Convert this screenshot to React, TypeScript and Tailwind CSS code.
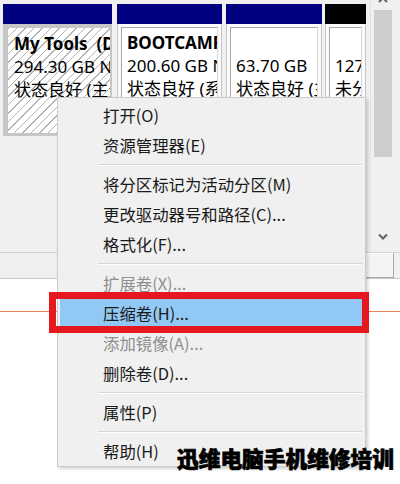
import React from "react";

type Item = { label: string; disabled?: boolean; active?: boolean } | "sep";

const items: Item[] = [
  { label: "打开(O)" },
  { label: "资源管理器(E)" },
  "sep",
  { label: "将分区标记为活动分区(M)" },
  { label: "更改驱动器号和路径(C)..." },
  { label: "格式化(F)..." },
  "sep",
  { label: "扩展卷(X)...", disabled: true },
  { label: "压缩卷(H)...", active: true },
  { label: "添加镜像(A)...", disabled: true },
  { label: "删除卷(D)..." },
  "sep",
  { label: "属性(P)" },
  "sep",
  { label: "帮助(H)" },
];

function Tile({
  width,
  ml,
  header,
  selected,
  lines,
}: {
  width: string;
  ml: string;
  header: string;
  selected?: boolean;
  lines: { text: string; bold?: boolean }[];
}) {
  const rows = lines.map((l, i) => (
    <div
      key={i}
      className={`h-[23px] leading-[23px] whitespace-pre text-[17px] text-black ${l.bold ? "font-bold" : ""}`}
    >
      {l.text}
    </div>
  ));
  return (
    <div className={`${width} ${ml} flex flex-col shrink-0`}>
      <div className={`h-[20px] ${header}`} />
      {selected ? (
        <div className="h-[112px] bg-[#c6c6c6] pt-[4px] pl-[5px] pr-[2px] pb-[3px] flex">
          <div className="flex-1 overflow-hidden bg-[repeating-linear-gradient(135deg,#b4b4b4_0px,#b4b4b4_1px,#ffffff_1px,#ffffff_6px)] pl-[6px] pt-[4px]">
            {rows}
          </div>
        </div>
      ) : (
        <div className="h-[112px] bg-[#fbfbfb] border-x border-b border-[#c4c4c4] pt-[3px] px-[3px] pb-[3px] flex">
          <div className="flex-1 overflow-hidden bg-white border border-t-[#a8a8a8] border-l-[#a8a8a8] border-r-[#d8d8d8] border-b-[#d8d8d8] pl-[5px] pt-[3px]">
            {rows}
          </div>
        </div>
      )}
    </div>
  );
}

export default function App() {
  return (
    <div
      className="relative w-[400px] h-[484px] overflow-hidden bg-white"
      style={{ fontFamily: '"Noto Sans", "Noto Sans CJK SC", sans-serif' }}
    >
      {/* top panel */}
      <div className="h-[279px] bg-[#f0f0f0] flex flex-col border-b border-[#c8c8c8]">
        <div className="flex flex-1 min-h-0">
          <div className="flex-1 flex pt-[4px] items-start">
            <Tile
              width="w-[109px]"
              ml="ml-[3px]"
              header="bg-[#000080]"
              selected
              lines={[
                { text: "My Tools  (D:)", bold: true },
                { text: "294.30 GB NTFS" },
                { text: "状态良好 (主分区)" },
              ]}
            />
            <Tile
              width="w-[105px]"
              ml="ml-[5px]"
              header="bg-[#000080]"
              lines={[
                { text: "BOOTCAMP (C:)", bold: true },
                { text: "200.60 GB NTFS" },
                { text: "状态良好 (系统, 启动)" },
              ]}
            />
            <Tile
              width="w-[96px]"
              ml="ml-[4px]"
              header="bg-[#000080]"
              lines={[
                { text: "" },
                { text: "63.70 GB" },
                { text: "状态良好 (主分区)" },
              ]}
            />
            <Tile
              width="w-[41px]"
              ml="ml-[3px]"
              header="bg-black"
              lines={[{ text: "" }, { text: "127.00 GB" }, { text: "未分配" }]}
            />
          </div>
          {/* vertical scrollbar */}
          <div className="w-[30px] flex flex-col pl-[3px] pr-[8px] border-l border-[#e4e4e4]">
            <div className="h-[10px] flex justify-center items-start overflow-hidden">
              <svg width="10" height="10" viewBox="0 0 10 10" className="-mt-[5px]">
                <path d="M1 7 L5 3 L9 7" fill="none" stroke="#606060" strokeWidth="2" />
              </svg>
            </div>
            <div className="h-[147px] bg-[#cdcdcd]" />
            <div className="flex-1" />
            <div className="h-[20px] flex justify-center items-center mb-[6px]">
              <svg width="10" height="7" viewBox="0 0 10 7">
                <path d="M1 1.5 L5 5.5 L9 1.5" fill="none" stroke="#606060" strokeWidth="2" />
              </svg>
            </div>
          </div>
        </div>
        {/* horizontal scrollbar row */}
        <div className="h-[26px] border-t border-[#d4d4d4] flex justify-end">
          <div className="w-[28px] mr-[6px] bg-[#f4f4f4] border border-t-white border-l-white border-r-[#a8a8a8] border-b-[#a8a8a8]" />
        </div>
      </div>

      {/* orange line */}
      <div className="mt-[32px] h-px bg-[#e8834f]" />

      {/* context menu */}
      <div className="absolute left-[57px] top-[97px] w-[309px] h-[370px] bg-[#f0f0f0] border border-[#cccccc] shadow-[2px_2px_3px_rgba(0,0,0,0.18)] pt-[2px] flex flex-col">
        {items.map((it, i) =>
          it === "sep" ? (
            <div key={i} className="h-[9px] flex flex-col justify-center pl-[40px] pr-[3px]">
              <div className="h-px bg-[#d7d7d7]" />
              <div className="h-px bg-white" />
            </div>
          ) : (
            <div
              key={i}
              className={`h-[30px] mx-[2px] flex items-center pl-[43px] text-[16.4px] whitespace-nowrap ${
                it.active ? "bg-[#92c8f4]" : ""
              } ${it.disabled ? "text-[#8e8e8e]" : "text-[#1a1a1a]"}`}
              style={{ fontFamily: '"Noto Sans CJK SC", sans-serif' }}
            >
              {it.label}
            </div>
          )
        )}
      </div>

      {/* red annotation box */}
      <div className="absolute left-[49px] top-[292px] w-[320px] h-[41px] border-[7px] border-[#e5171f]" />

      {/* watermark */}
      <div
        className="absolute left-[177px] top-[447px] text-[21.7px] leading-none font-black text-black whitespace-nowrap [-webkit-text-stroke:0.7px_#000]"
        style={{ fontFamily: '"Noto Sans CJK SC", sans-serif' }}
      >
        迅维电脑手机维修培训
      </div>
    </div>
  );
}
